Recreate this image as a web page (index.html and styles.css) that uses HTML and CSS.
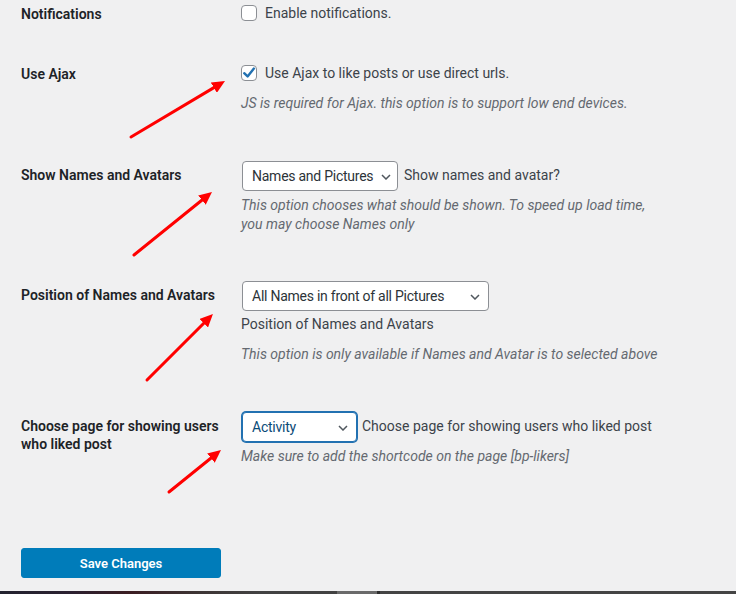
FILE: index.html
```html
<!DOCTYPE html>
<html lang="en">
<head>
<meta charset="utf-8">
<title>Settings</title>
<link rel="stylesheet" href="styles.css">
</head>
<body>
<div class="page">
  <form class="form-table">
    <div class="row row-first">
      <div class="th">Notifications</div>
      <div class="td">
        <label class="check-line"><span class="checkbox"></span>Enable notifications.</label>
      </div>
    </div>
    <div class="row row-check">
      <div class="th">Use Ajax</div>
      <div class="td">
        <label class="check-line"><span class="checkbox checked"><svg viewBox="0 0 16 16" width="16" height="16"><path d="M3.2 8.2 L6.6 11.4 L12.9 3.6" fill="none" stroke="#2271b1" stroke-width="2.4" stroke-linecap="round" stroke-linejoin="round"/></svg></span>Use Ajax to like posts or use direct urls.</label>
        <p class="description desc-gap">JS is required for Ajax. this option is to support low end devices.</p>
      </div>
    </div>
    <div class="row">
      <div class="th th-select">Show Names and Avatars</div>
      <div class="td">
        <div class="select-line">
          <span class="select w1">Names and Pictures<svg class="chev" viewBox="0 0 10 6" width="10" height="6"><path d="M1 1 L5 5 L9 1" fill="none" stroke="#50575e" stroke-width="1.5"/></svg></span>
          <span class="side">Show names and avatar?</span>
        </div>
        <p class="description desc-tight desc-two">This option chooses what should be shown. To speed up load time,<br>you may choose Names only</p>
      </div>
    </div>
    <div class="row">
      <div class="th th-select">Position of Names and Avatars</div>
      <div class="td">
        <div class="select-line">
          <span class="select w2">All Names in front of all Pictures<svg class="chev" viewBox="0 0 10 6" width="10" height="6"><path d="M1 1 L5 5 L9 1" fill="none" stroke="#50575e" stroke-width="1.5"/></svg></span>
        </div>
        <p class="under">Position of Names and Avatars</p>
        <p class="description desc-loose">This option is only available if Names and Avatar is to selected above</p>
      </div>
    </div>
    <div class="row">
      <div class="th th-select">Choose page for showing users who liked post</div>
      <div class="td">
        <div class="select-line">
          <span class="select w3 focus">Activity<svg class="chev" viewBox="0 0 10 6" width="10" height="6"><path d="M1 1 L5 5 L9 1" fill="none" stroke="#50575e" stroke-width="1.5"/></svg></span>
          <span class="side side-narrow">Choose page for showing users who liked post</span>
        </div>
        <p class="description desc-tight">Make sure to add the shortcode on the page [bp-likers]</p>
      </div>
    </div>
    <div class="submit">
      <button type="button" class="button-primary">Save Changes</button>
    </div>
  </form>
  <div class="taskbar"></div>
  <svg class="arrows" width="736" height="594" viewBox="0 0 736 594">
    <defs>
      <marker id="head" markerUnits="userSpaceOnUse" markerWidth="14" markerHeight="12" refX="5" refY="6" orient="auto">
        <path d="M0 0 L13 6 L0 12 Z" fill="#ff0000"/>
      </marker>
    </defs>
    <line x1="131" y1="137" x2="218.1" y2="85.1" stroke="#ff0000" stroke-width="3" stroke-linecap="round" marker-end="url(#head)"/>
    <line x1="134" y1="255" x2="205.8" y2="197" stroke="#ff0000" stroke-width="3" stroke-linecap="round" marker-end="url(#head)"/>
    <line x1="147" y1="380" x2="207.3" y2="319.7" stroke="#ff0000" stroke-width="3" stroke-linecap="round" marker-end="url(#head)"/>
    <line x1="169" y1="492" x2="214.8" y2="455" stroke="#ff0000" stroke-width="3" stroke-linecap="round" marker-end="url(#head)"/>
  </svg>
</div>
</body>
</html>
```
FILE: styles.css
```css
* { box-sizing: border-box; }
html, body { margin: 0; padding: 0; }
body {
  background: #f0f0f1;
  font-family: Roboto, "Noto Sans", sans-serif;
  font-size: 14px;
  color: #3c434a;
  overflow: hidden;
}
.page {
  position: relative;
  width: 736px;
  height: 594px;
  display: flex;
  flex-direction: column;
}
.form-table {
  padding-left: 21px;
  display: flex;
  flex-direction: column;
}
.row {
  display: grid;
  grid-template-columns: 220px 1fr;
  padding: 24px 0;
}
.row-first { padding: 3px 0 16px; }
.th {
  color: #1d2327;
  font-weight: 600;
  line-height: 18px;
  padding-top: 2px;
  padding-right: 10px;
}
.th-select { padding-top: 5px; }
.td { display: flex; flex-direction: column; align-items: flex-start; }
.check-line {
  display: flex;
  align-items: center;
  height: 20px;
  line-height: 20px;
}
.checkbox {
  width: 16px;
  height: 16px;
  border: 1px solid #8c8f94;
  border-radius: 4px;
  background: #fff;
  margin-right: 8px;
  display: flex;
  align-items: center;
  justify-content: center;
  flex: none;
}
.checkbox svg { display: block; margin: -1px; }
p { margin: 0; }
.description {
  color: #646970;
  font-style: italic;
  line-height: 19px;
}
.desc-gap { margin-top: 10px; line-height: 20px; }
.desc-tight { margin-top: 5px; }
.desc-two { margin-bottom: -1px; }
.desc-loose { margin-top: 11px; }
.under { margin-top: 4px; line-height: 19px; }
.select-line {
  display: flex;
  align-items: center;
  height: 30px;
  white-space: nowrap;
}
.select {
  position: relative;
  display: flex;
  align-items: center;
  height: 30px;
  margin-left: 1px;
  padding: 0 22px 0 9px;
  border: 1px solid #8c8f94;
  border-radius: 4px;
  background: #fff;
  color: #2c3338;
  line-height: 28px;
  letter-spacing: -0.25px;
  white-space: nowrap;
  overflow: hidden;
}
.select .chev { position: absolute; right: 6px; top: 12px; }
.w1 { width: 156px; }
.w2 { width: 247px; }
.w3 { width: 115px; }
.w2 .chev, .w3 .chev { right: 8px; }
.focus {
  border-color: #2271b1;
  box-shadow: 0 0 0 1px #2271b1;
  color: #0a4b78;
  overflow: visible;
}
.side { margin-left: 6px; margin-top: -2px; }
.side-narrow { margin-left: 5px; }
.submit { margin-top: 58px; }
.button-primary {
  width: 200px;
  height: 30px;
  border: 1px solid #007cba;
  border-radius: 3px;
  background: #007cba;
  color: #fff;
  font-family: inherit;
  font-size: 13px;
  font-weight: 600;
  padding: 0;
}
.taskbar {
  margin-top: auto;
  height: 3px;
  background:
    linear-gradient(90deg, transparent 0 337px, #6a6a6a 337px 377px, #2e2e2e 377px 380px, #444 380px 736px),
    linear-gradient(90deg, #23232f 0, #2b2030 70px, #3b1d22 130px, #3d3535 200px, #424242 260px, #424242 337px);
}
.arrows {
  position: absolute;
  left: 0;
  top: 0;
  pointer-events: none;
}
```
